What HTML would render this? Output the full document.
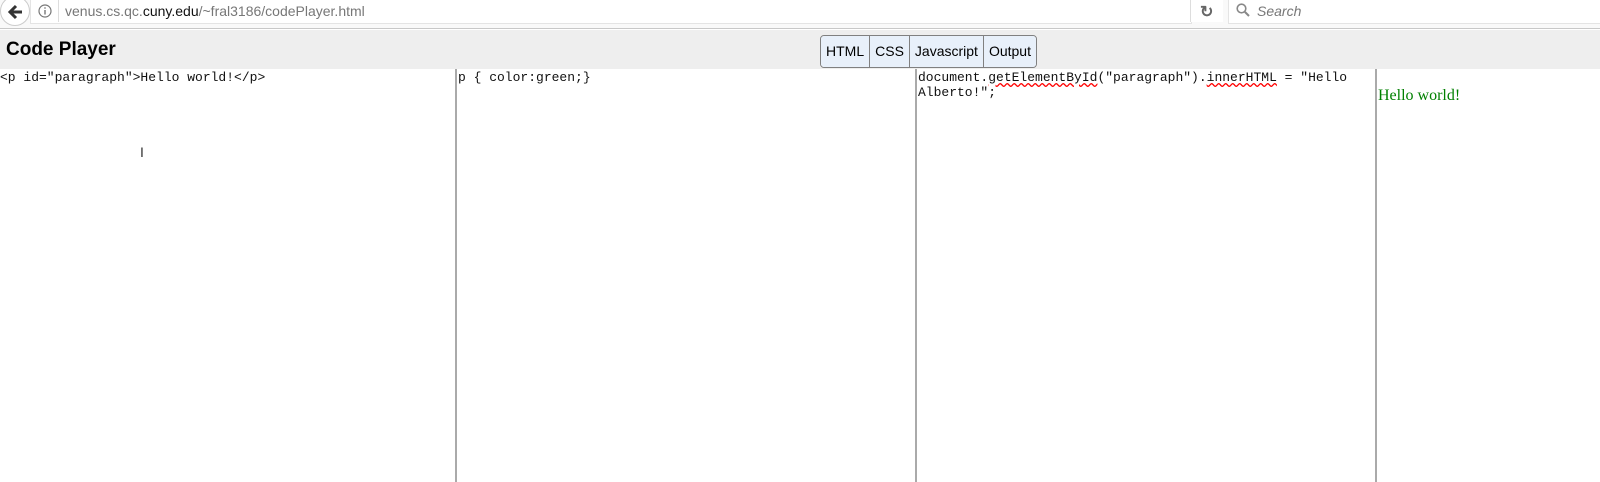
<!DOCTYPE html>
<html><head><style>
body{margin:0;width:1600px;height:482px;overflow:hidden;background:#fff;font-family:"Liberation Sans",sans-serif;position:relative}
.chrome{position:absolute;left:0;top:0;width:1600px;height:28px;background:#f9f9f9;border-bottom:1px solid #c8c8c8}
.url{position:absolute;left:30px;top:0;width:1160px;height:23px;background:#fff;border:1px solid #e4e4e4;border-top:none}
.back{position:absolute;left:0;top:-4px;width:30px;height:30px;border-radius:50%;background:#fff;border:1px solid #ccc;box-sizing:border-box}
.search{position:absolute;left:1228px;top:0;width:372px;height:23px;background:#fff;border:1px solid #e4e4e4;border-top:none}
.hdr{position:absolute;left:0;top:30px;width:1600px;height:39px;background:#eee}
.btns{position:absolute;left:820px;top:35px;height:31px;display:flex;border:1px solid #808080;border-radius:4px;overflow:hidden}
.btns div{background:#e8f0fa;font-size:14px;line-height:31px;padding:0 5px;border-left:1px solid #808080}
.btns div:first-child{border-left:none}
.panel{position:absolute;top:69px;font-family:"Liberation Mono",monospace;font-size:13px;line-height:15px;color:#111}
.div{position:absolute;top:69px;width:2px;height:413px;background:#aaa}
</style></head><body>
<div class="chrome">
<div class="url"></div>
<div class="back"><svg width="28" height="28" viewBox="0 0 28 28" style="position:absolute;left:1px;top:1px"><path d="M20 14H9M14 8l-6 6 6 6" stroke="#333" stroke-width="3" fill="none"/></svg></div>
<svg style="position:absolute;left:38px;top:4px" width="14" height="14"><circle cx="7" cy="7" r="6" fill="none" stroke="#777" stroke-width="1.2"/><rect x="6.3" y="6" width="1.4" height="4.5" fill="#777"/><rect x="6.3" y="3.3" width="1.4" height="1.4" fill="#777"/></svg>
<div style="position:absolute;left:58px;top:0;width:1px;height:22px;background:#ddd"></div>
<div style="position:absolute;left:65px;top:3px;font-size:14px;color:#777">venus.cs.qc.<span style="color:#111">cuny.edu</span>/~fral3186/codePlayer.html</div>
<div style="position:absolute;left:1190px;top:0;width:32px;height:22px;border-left:1px solid #ddd;background:#fff"></div>
<div style="position:absolute;left:1200px;top:2px;font-size:16px;color:#666;font-weight:bold">↻</div>
<div class="search"></div>
<svg style="position:absolute;left:1236px;top:3px" width="14" height="14"><circle cx="5.5" cy="5.5" r="4.3" fill="none" stroke="#888" stroke-width="1.6"/><path d="M9 9l4 4" stroke="#888" stroke-width="2"/></svg>
<div style="position:absolute;left:1257px;top:3px;font-size:14px;color:#777;font-style:italic">Search</div>
</div>
<div class="hdr"><div style="position:absolute;left:6px;top:9px;font-size:19px;font-weight:bold">Code Player</div></div>
<div class="btns"><div>HTML</div><div>CSS</div><div>Javascript</div><div>Output</div></div>
<div class="panel" style="left:0;top:70px">&lt;p id="paragraph"&gt;Hello world!&lt;/p&gt;</div>
<div class="div" style="left:455px"></div>
<div class="panel" style="left:458px;top:70px">p { color:green;}</div>
<div class="div" style="left:915px"></div>
<div class="panel" style="left:918px;top:70px">document.<span style="text-decoration:underline wavy red">getElementById</span>("paragraph").<span style="text-decoration:underline wavy red">innerHTML</span> = "Hello<br>Alberto!";</div>
<div class="div" style="left:1375px"></div>
<div style="position:absolute;left:1378px;top:87px;font-family:'Liberation Serif',serif;font-size:16px;color:green">Hello world!</div>
<div style="position:absolute;left:140px;top:144px;font-size:14px;color:#333">I</div>
</body></html>
